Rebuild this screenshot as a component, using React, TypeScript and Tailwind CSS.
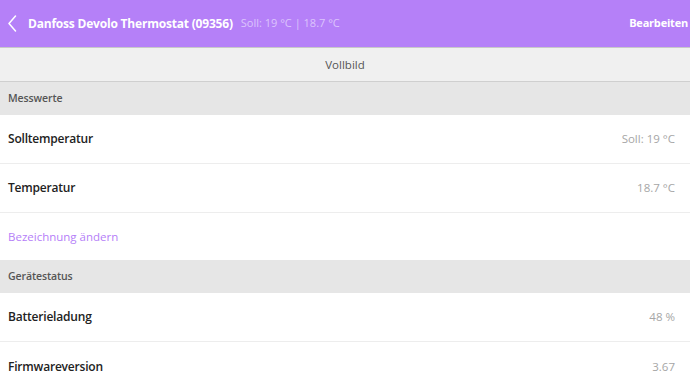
import React from "react";

interface Row {
  label: string;
  value: string;
}

const messwerte: Row[] = [
  { label: "Solltemperatur", value: "Soll: 19 °C" },
  { label: "Temperatur", value: "18.7 °C" },
];

const status: Row[] = [
  { label: "Batterieladung", value: "48 %" },
  { label: "Firmwareversion", value: "3.67" },
];

function SectionHeader({ title }: { title: string }) {
  return (
    <div className="h-[33px] flex items-center px-2 bg-[#e6e6e6] text-[10.5px] font-semibold text-[#555] tracking-[-0.1px]">
      {title}
    </div>
  );
}

function DataRow({ row, last }: { row: Row; last?: boolean }) {
  return (
    <div
      className={`h-[49px] flex items-center justify-between pl-2 pr-[15px] bg-white ${
        last ? "" : "border-b border-[#ededed]"
      }`}
    >
      <span className="text-[12px] font-semibold text-[#222] tracking-[-0.2px]">{row.label}</span>
      <span className="text-[11.5px] text-[#a6a6a6]">{row.value}</span>
    </div>
  );
}

export default function App() {
  return (
    <div className="w-[690px] h-[387px] overflow-hidden bg-white font-['Open_Sans',sans-serif]">
      {/* Header */}
      <div className="h-[48px] flex items-center justify-between bg-[#b580f8] border-b border-[#c8c8c8] pl-2 pr-[2px]">
        <div className="flex items-center">
          <svg width="9" height="17" viewBox="0 0 9 17" className="mr-[11px]">
            <path d="M7.5 1 L1 8.5 L7.5 16" fill="none" stroke="#fff" strokeWidth="1.5" strokeLinecap="round" strokeLinejoin="round" />
          </svg>
          <span className="text-[12px] font-bold text-white tracking-[-0.2px]">Danfoss Devolo Thermostat (09356)</span>
          <span className="ml-2 text-[11px] text-[#dcc4fc]">Soll: 19 °C | 18.7 °C</span>
        </div>
        <span className="text-[11px] font-bold text-white tracking-[-0.2px]">Bearbeiten</span>
      </div>

      {/* Vollbild */}
      <div className="h-[34px] flex items-center justify-center bg-[#f0f0f0] border-b border-[#cfcfcf] text-[11.5px] text-[#555]">
        Vollbild
      </div>

      <SectionHeader title="Messwerte" />
      {messwerte.map((r) => (
        <DataRow key={r.label} row={r} />
      ))}
      <div className="h-[47px] flex items-center px-2 bg-white text-[11.5px] text-[#b580f8]">
        Bezeichnung ändern
      </div>

      <SectionHeader title="Gerätestatus" />
      {status.map((r, i) => (
        <DataRow key={r.label} row={r} last={i === status.length - 1} />
      ))}
    </div>
  );
}
